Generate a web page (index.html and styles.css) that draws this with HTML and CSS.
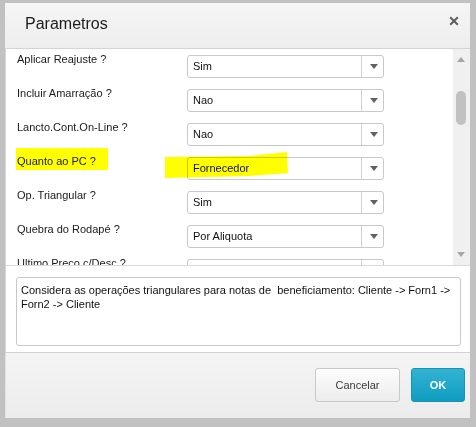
FILE: index.html
```html
<!DOCTYPE html>
<html lang="pt">
<head>
<meta charset="utf-8">
<title>Parametros</title>
<link rel="stylesheet" href="styles.css">
</head>
<body>
<div class="dialog">
  <div class="header">
    <div class="title">Parametros</div>
    <svg class="close" width="10" height="10" viewBox="0 0 10 10"><path d="M1.2 1.2L8.8 8.8M8.8 1.2L1.2 8.8" stroke="#5d5d5d" stroke-width="2" stroke-linecap="butt"/></svg>
  </div>
  <div class="panel">
    <div class="list">
      <div class="row"><div class="label">Aplicar Reajuste ?</div><div class="select"><span class="val">Sim</span><span class="arrow"></span></div></div>
      <div class="row"><div class="label">Incluir Amarração ?</div><div class="select"><span class="val">Nao</span><span class="arrow"></span></div></div>
      <div class="row"><div class="label">Lancto.Cont.On-Line ?</div><div class="select"><span class="val">Nao</span><span class="arrow"></span></div></div>
      <div class="row marked"><div class="label"><span class="hl">Quanto ao PC ?</span></div><div class="select"><span class="val">Fornecedor</span><span class="arrow"></span></div>
        <svg class="marker" width="124" height="26" viewBox="0 0 124 26"><polygon points="0,5 84,4 122,0 123,21 84,24 0,26" fill="#ffff00"/></svg>
      </div>
      <div class="row"><div class="label">Op. Triangular ?</div><div class="select"><span class="val">Sim</span><span class="arrow"></span></div></div>
      <div class="row"><div class="label">Quebra do Rodapé ?</div><div class="select"><span class="val">Por Aliquota</span><span class="arrow"></span></div></div>
      <div class="row"><div class="label">Ultimo Preco c/Desc ?</div><div class="select"><span class="val"></span><span class="arrow"></span></div></div>
    </div>
    <div class="scrollbar">
      <span class="up"></span>
      <span class="thumb"></span>
      <span class="down"></span>
    </div>
  </div>
  <div class="desc">
    <div class="textbox">Considera as operações triangulares para notas de&nbsp; beneficiamento: Cliente -&gt; Forn1 -&gt;<br>Forn2 -&gt; Cliente</div>
  </div>
  <div class="footer">
    <button class="btn cancel">Cancelar</button>
    <button class="btn ok">OK</button>
  </div>
</div>
</body>
</html>
```
FILE: styles.css
```css
html, body {
  margin: 0;
  padding: 0;
}
body {
  width: 476px;
  height: 427px;
  background: #c1c1c1;
  font-family: "Liberation Sans", Arial, sans-serif;
  overflow: hidden;
}
.dialog {
  margin: 3px 0 0 5px;
  width: 465px;
  height: 415px;
  display: flex;
  flex-direction: column;
  background: #ffffff;
}
.header {
  height: 45px;
  border-bottom: 1px solid #d4d4d4;
  background: linear-gradient(#f5f5f5, #eeeeee);
  display: flex;
  justify-content: space-between;
  align-items: flex-start;
  padding: 0 11px 0 20px;
}
.title {
  font-size: 16px;
  line-height: 20px;
  color: #1c1c1c;
  padding-top: 11px;
}
.close {
  margin-top: 13px;
}
.panel {
  height: 216px;
  display: flex;
  border-bottom: 1px solid #dadada;
  border-left: 1px solid #d6d6d6;
}
.list {
  flex: 1;
  overflow: hidden;
  padding: 4px 0 0 11px;
}
.row {
  position: relative;
  height: 34px;
  display: flex;
  align-items: flex-start;
}
.label {
  width: 170px;
  font-size: 11px;
  line-height: 13px;
  color: #1a1a1a;
  white-space: nowrap;
}
.hl {
  display: inline-block;
  background: #ffff00;
  padding: 7px 12px 2px 1px;
  margin: -7px 0 0 -1px;
}
.select {
  margin-top: 2px;
  width: 197px;
  height: 23px;
  box-sizing: border-box;
  border: 1px solid #c9c9c9;
  border-radius: 3px;
  background: #fff;
  display: flex;
}
.val {
  flex: 1;
  font-size: 11px;
  line-height: 21px;
  padding-left: 5px;
  color: #111;
}
.arrow {
  width: 21px;
  border-left: 1px solid #d0d0d0;
  position: relative;
}
.arrow::after {
  content: "";
  position: absolute;
  left: 8px;
  top: 8px;
  border-left: 4px solid transparent;
  border-right: 4px solid transparent;
  border-top: 5px solid #5f6166;
}
.marker {
  position: absolute;
  left: 148px;
  top: -3px;
  mix-blend-mode: multiply;
}
.scrollbar {
  width: 17px;
  background: #f0f0f0;
  position: relative;
}
.up, .down {
  position: absolute;
  left: 4px;
  border-left: 4px solid transparent;
  border-right: 4px solid transparent;
}
.up {
  top: 8px;
  border-bottom: 5px solid #a6a6a6;
}
.down {
  bottom: 8px;
  border-top: 5px solid #a6a6a6;
}
.thumb {
  position: absolute;
  left: 3px;
  top: 42px;
  width: 10px;
  height: 34px;
  border-radius: 5px;
  background: #c1c1c1;
}
.desc {
  height: 87px;
  box-sizing: border-box;
  padding: 11px 9px 0 10px;
  border-bottom: 1px solid #d2d2d2;
  border-left: 1px solid #d6d6d6;
}
.textbox {
  height: 69px;
  box-sizing: border-box;
  border: 1px solid #c9c9c9;
  border-radius: 3px;
  padding: 5px 4px;
  font-size: 11px;
  line-height: 14px;
  color: #111;
  white-space: nowrap;
}
.footer {
  flex: 1;
  background: linear-gradient(#f4f4f4, #ececec);
  border-left: 1px solid #e2e2e2;
  display: flex;
  justify-content: flex-end;
  align-items: flex-start;
  gap: 11px;
  padding: 15px 5px 0 0;
}
.btn {
  height: 34px;
  border-radius: 3px;
  font-family: "Liberation Sans", Arial, sans-serif;
  font-size: 11px;
  padding: 0;
}
.cancel {
  width: 85px;
  border: 1px solid #c8c8c8;
  background: linear-gradient(#fdfdfd, #ececec);
  color: #3a3a3a;
}
.ok {
  width: 54px;
  border: 1px solid #1594b5;
  background: linear-gradient(#33b3d4, #0f9cbf);
  color: #fff;
  font-weight: bold;
}
```
